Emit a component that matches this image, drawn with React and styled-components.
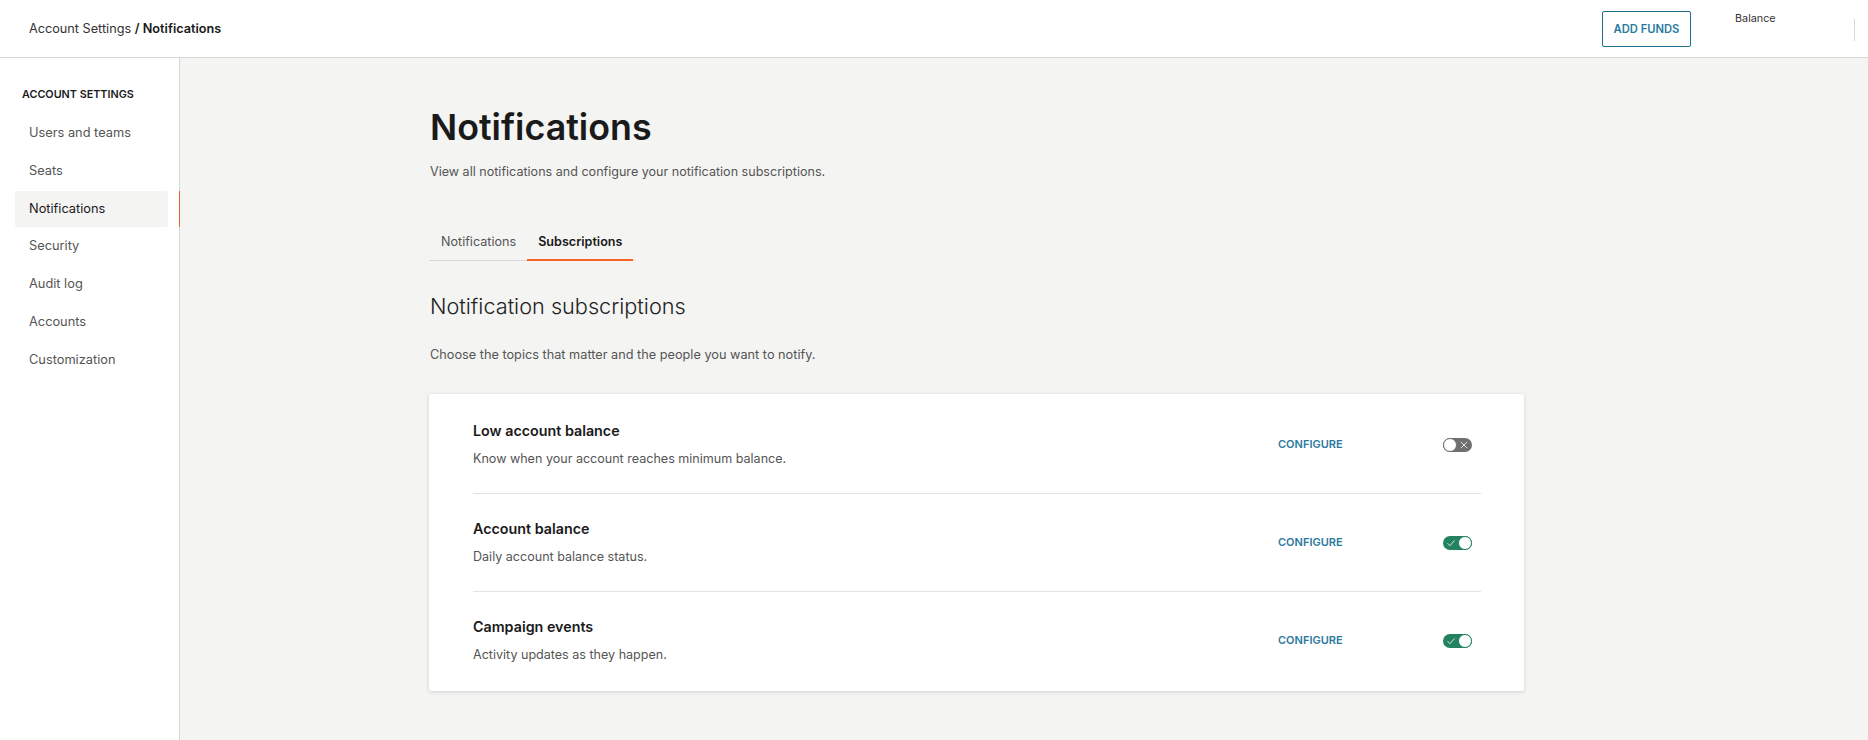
import React from "react";
import styled, { createGlobalStyle } from "styled-components";

const Global = createGlobalStyle`
  html, body { margin: 0; padding: 0; height: 100%; background: #f4f4f3; }
  body { font-family: Inter, "Noto Sans", sans-serif; color: #1a1a1a; overflow: hidden; }
  * { box-sizing: border-box; }
`;

const Page = styled.div`
  width: 1868px;
  height: 740px;
  display: flex;
  flex-direction: column;
`;

const Header = styled.header`
  height: 58px;
  flex: none;
  background: #fff;
  border-bottom: 1px solid #d6d6d6;
  display: flex;
  align-items: center;
  padding: 0 13px 0 29px;
`;

const Crumbs = styled.div`
  font-size: 12.7px;
  color: #333;
  flex: 1;
  b { font-weight: 600; color: #1a1a1a; }
`;

const AddFunds = styled.button`
  width: 89px;
  height: 36px;
  background: #fff;
  border: 1px solid #1f6f8f;
  border-radius: 2px;
  color: #2b7a9e;
  font: 600 11.2px Inter, sans-serif;
  padding: 0;
`;

const Balance = styled.div`
  width: 164px;
  height: 36px;
  padding: 1px 0 0 44px;
  font-size: 10.8px;
  color: #333;
  display: flex;
  justify-content: space-between;
`;

const VRule = styled.span`
  width: 1px;
  height: 22px;
  margin-top: 7px;
  background: #d6d6d6;
`;

const Body = styled.div`
  flex: 1;
  display: flex;
  min-height: 0;
`;

const Side = styled.nav`
  width: 180px;
  flex: none;
  background: #fff;
  border-right: 1px solid #d6d6d6;
  padding: 30px 0 0 15px;
`;

const SideTitle = styled.div`
  font-size: 10.8px;
  font-weight: 600;
  color: #1a1a1a;
  padding: 0 0 0 7px;
  line-height: 13px;
  margin-bottom: 14px;
`;

const SideItem = styled.div`
  position: relative;
  width: 153px;
  height: 36px;
  margin-bottom: 1.8px;
  padding: 0 0 1px 14px;
  display: flex;
  align-items: center;
  font-size: 12.8px;
  border-radius: 2px;
  color: ${p => (p.$active ? "#1a1a1a" : "#555")};
  background: ${p => (p.$active ? "#f4f4f3" : "transparent")};
  ${p =>
    p.$active &&
    `&::after {
      content: "";
      position: absolute;
      top: 0;
      bottom: 0;
      left: 164px;
      width: 1px;
      background: #f0602a;
    }`}
`;

const Main = styled.main`
  flex: 1;
  padding: 47px 0 0 249px;
`;

const Content = styled.div`
  width: 1095px;
`;

const Title = styled.h1`
  margin: 0 0 0 1px;
  font-size: 35.8px;
  line-height: 44px;
  font-weight: 600;
  color: #1a1a1a;
`;

const Lead = styled.p`
  margin: 14px 0 0 1px;
  font-size: 12.57px;
  line-height: 18px;
  color: #555;
`;

const Tabs = styled.div`
  display: flex;
  width: 206px;
  margin-top: 41px;
  border-bottom: 1px solid #d9d9d9;
`;

const Tab = styled.div`
  height: 39px;
  padding: 2px 11px 0 ${p => (p.$active ? "11px" : "12px")};
  display: flex;
  align-items: center;
  font-size: 12.6px;
  font-weight: ${p => (p.$active ? 600 : 400)};
  color: ${p => (p.$active ? "#1a1a1a" : "#555")};
  border-bottom: 2px solid ${p => (p.$active ? "#f96227" : "transparent")};
  margin-bottom: -1px;
`;

const Sub = styled.h2`
  margin: 31px 0 0 1px;
  font-size: 21.7px;
  line-height: 28px;
  font-weight: 300;
  color: #222;
`;

const Hint = styled.p`
  margin: 26px 0 0 1px;
  font-size: 12.73px;
  line-height: 18px;
  color: #555;
`;

const Card = styled.section`
  margin-top: 30px;
  background: #fff;
  border-radius: 3px;
  box-shadow: 0 1px 4px rgba(0, 0, 0, 0.15);
  padding: 2px 43px 1px 44px;
`;

const Row = styled.div`
  height: 98px;
  display: flex;
  align-items: center;
  border-bottom: ${p => (p.$last ? "1px solid transparent" : "1px solid #e2e2e2")};
`;

const RowText = styled.div`
  flex: 1;
  align-self: flex-start;
  padding-top: 26px;
`;

const RowTitle = styled.div`
  font-size: 14.3px;
  font-weight: 600;
  line-height: 18px;
  color: #1a1a1a;
`;

const RowDesc = styled.div`
  margin-top: 10px;
  font-size: 12.55px;
  line-height: 18px;
  color: #555;
`;

const Configure = styled.a`
  width: 165px;
  margin-top: -1px;
  font-size: 11px;
  font-weight: 600;
  color: #2b7a9e;
`;

const Toggle = styled.div`
  position: relative;
  width: 29px;
  height: 14px;
  margin-right: 9px;
  border-radius: 7px;
  background: ${p => (p.$on ? "#23835f" : "#6f6f6f")};
`;

const Knob = styled.span`
  position: absolute;
  top: 0;
  left: ${p => (p.$on ? "15px" : "0")};
  width: 14px;
  height: 14px;
  border-radius: 50%;
  background: #fff;
  border: 1px solid ${p => (p.$on ? "#23835f" : "#6f6f6f")};
`;

const Mark = styled.svg`
  position: absolute;
  top: 3px;
  left: ${p => (p.$on ? "4px" : "17px")};
  width: 8px;
  height: 8px;
  fill: none;
  stroke: #fff;
  stroke-width: 0.8;
`;

function Switch({ on }) {
  return (
    <Toggle $on={on}>
      <Mark $on={on} viewBox="0 0 8 8">
        {on ? <path d="M0.5 4.2 L3 6.7 L7.5 1.5" /> : <path d="M0.8 0.8 L7.2 7.2 M7.2 0.8 L0.8 7.2" />}
      </Mark>
      <Knob $on={on} />
    </Toggle>
  );
}

const nav = ["Users and teams", "Seats", "Notifications", "Security", "Audit log", "Accounts", "Customization"];
const rows = [
  ["Low account balance", "Know when your account reaches minimum balance.", false],
  ["Account balance", "Daily account balance status.", true],
  ["Campaign events", "Activity updates as they happen.", true],
];

export default function App() {
  return (
    <Page>
      <Global />
      <Header>
        <Crumbs>
          Account Settings <b>/ Notifications</b>
        </Crumbs>
        <AddFunds>ADD FUNDS</AddFunds>
        <Balance>
          Balance
          <VRule />
        </Balance>
      </Header>
      <Body>
        <Side>
          <SideTitle>ACCOUNT SETTINGS</SideTitle>
          {nav.map(n => (
            <SideItem key={n} $active={n === "Notifications"}>
              {n}
            </SideItem>
          ))}
        </Side>
        <Main>
          <Content>
            <Title>Notifications</Title>
            <Lead>View all notifications and configure your notification subscriptions.</Lead>
            <Tabs>
              <Tab>Notifications</Tab>
              <Tab $active>Subscriptions</Tab>
            </Tabs>
            <Sub>Notification subscriptions</Sub>
            <Hint>Choose the topics that matter and the people you want to notify.</Hint>
            <Card>
              {rows.map(([t, d, on], i) => (
                <Row key={t} $last={i === rows.length - 1}>
                  <RowText>
                    <RowTitle>{t}</RowTitle>
                    <RowDesc>{d}</RowDesc>
                  </RowText>
                  <Configure>CONFIGURE</Configure>
                  <Switch on={on} />
                </Row>
              ))}
            </Card>
          </Content>
        </Main>
      </Body>
    </Page>
  );
}
